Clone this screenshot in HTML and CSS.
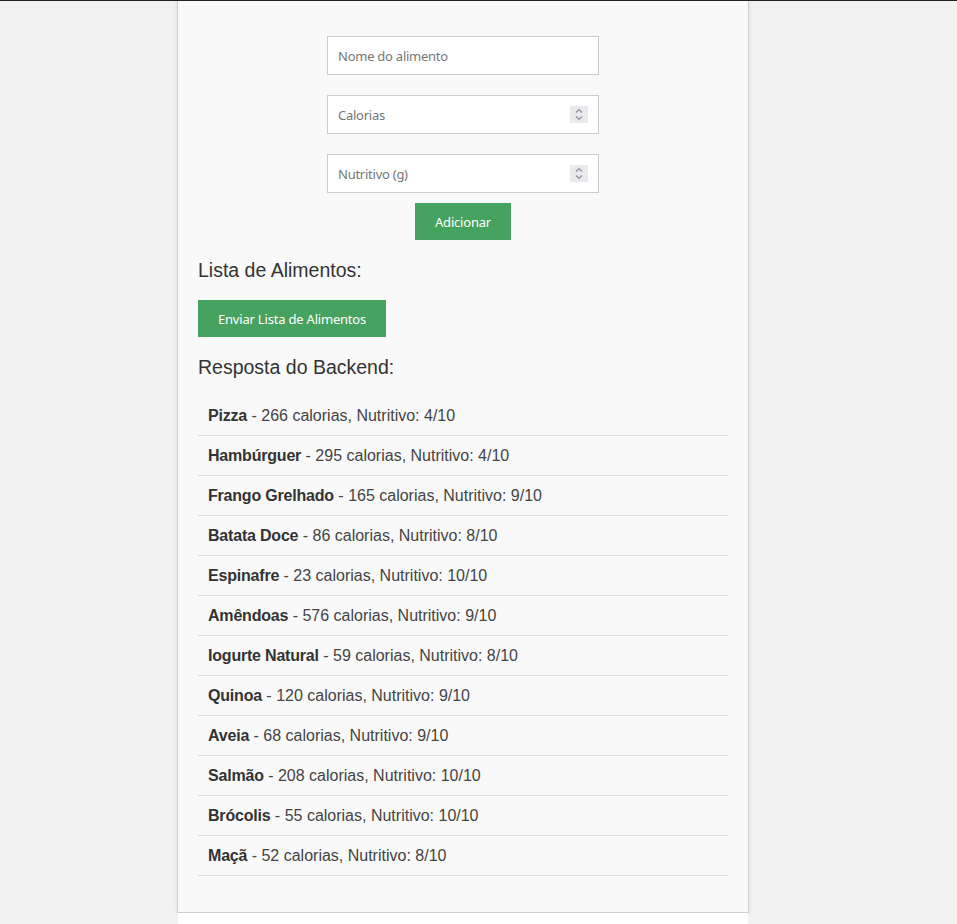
FILE: index.html
```html
<!DOCTYPE html>
<html lang="pt">
<head>
<meta charset="utf-8">
<title>Alimentos</title>
<link rel="stylesheet" href="styles.css">
</head>
<body>
<div class="topline"></div>
<div class="container">
  <form class="food-form">
    <input class="field" type="text" placeholder="Nome do alimento">
    <div class="num-wrap">
      <input class="field" type="number" placeholder="Calorias">
      <span class="spin"><svg width="18" height="17" viewBox="0 0 18 17"><path d="M6 6.5 L9 3.5 L12 6.5" fill="none" stroke="#8f8f99" stroke-width="1.2"/><path d="M6 10.5 L9 13.5 L12 10.5" fill="none" stroke="#8f8f99" stroke-width="1.2"/></svg></span>
    </div>
    <div class="num-wrap last">
      <input class="field" type="number" placeholder="Nutritivo (g)">
      <span class="spin"><svg width="18" height="17" viewBox="0 0 18 17"><path d="M6 6.5 L9 3.5 L12 6.5" fill="none" stroke="#8f8f99" stroke-width="1.2"/><path d="M6 10.5 L9 13.5 L12 10.5" fill="none" stroke="#8f8f99" stroke-width="1.2"/></svg></span>
    </div>
    <button type="button" class="btn">Adicionar</button>
  </form>
  <h3 class="heading">Lista de Alimentos:</h3>
  <button type="button" class="btn">Enviar Lista de Alimentos</button>
  <h3 class="heading response">Resposta do Backend:</h3>
  <ul class="results">
    <li><strong>Pizza</strong> - 266 calorias, Nutritivo: 4/10</li>
    <li><strong>Hambúrguer</strong> - 295 calorias, Nutritivo: 4/10</li>
    <li><strong>Frango Grelhado</strong> - 165 calorias, Nutritivo: 9/10</li>
    <li><strong>Batata Doce</strong> - 86 calorias, Nutritivo: 8/10</li>
    <li><strong>Espinafre</strong> - 23 calorias, Nutritivo: 10/10</li>
    <li><strong>Amêndoas</strong> - 576 calorias, Nutritivo: 9/10</li>
    <li><strong>Iogurte Natural</strong> - 59 calorias, Nutritivo: 8/10</li>
    <li><strong>Quinoa</strong> - 120 calorias, Nutritivo: 9/10</li>
    <li><strong>Aveia</strong> - 68 calorias, Nutritivo: 9/10</li>
    <li><strong>Salmão</strong> - 208 calorias, Nutritivo: 10/10</li>
    <li><strong>Brócolis</strong> - 55 calorias, Nutritivo: 10/10</li>
    <li><strong>Maçã</strong> - 52 calorias, Nutritivo: 8/10</li>
  </ul>
</div>
<div class="below"></div>
</body>
</html>
```

FILE: styles.css
```css
html, body {
  margin: 0;
  padding: 0;
  background: #f2f2f2;
  font-family: "Liberation Sans", Arial, sans-serif;
  color: #333;
}

.topline {
  height: 1px;
  background: #222;
}

.container {
  width: 530px;
  margin-left: 177px;
  padding: 35px 20px 20px;
  background: #f9f9f9;
  border: 1px solid #cfcfcf;
  border-top: none;
  box-shadow: 0 0 6px rgba(0, 0, 0, 0.08);
}

.food-form {
  display: flex;
  flex-direction: column;
  align-items: center;
}

.field {
  box-sizing: border-box;
  display: block;
  width: 272px;
  height: 39px;
  margin: 0 0 20px;
  padding: 0 10px;
  border: 1px solid #ccc;
  background: #fff;
  font-family: "Noto Sans", "Open Sans", sans-serif;
  font-size: 13px;
  letter-spacing: -0.25px;
  color: #333;
  outline: none;
  -moz-appearance: textfield;
}

.field::placeholder {
  color: #767676;
}

.field::-webkit-inner-spin-button,
.field::-webkit-outer-spin-button {
  -webkit-appearance: none;
  margin: 0;
}

.num-wrap {
  position: relative;
}

.num-wrap.last .field {
  margin-bottom: 10px;
}

.spin {
  position: absolute;
  top: 11px;
  right: 11px;
  width: 18px;
  height: 17px;
  background: #e9e9ee;
  display: block;
}

.spin svg {
  display: block;
}

.btn {
  box-sizing: border-box;
  height: 37px;
  padding: 0 20px;
  border: none;
  background: #46a25f;
  color: #fff;
  font-family: "Noto Sans", "Open Sans", sans-serif;
  font-size: 13px;
  letter-spacing: -0.2px;
  cursor: pointer;
}

.heading {
  margin: 19px 0;
  font-size: 19.5px;
  font-weight: normal;
  line-height: 22px;
  color: #333;
}

.heading.response {
  margin-bottom: 18px;
}

.results {
  list-style: none;
  margin: 0 0 16px;
  padding: 0;
}

.results li {
  padding: 10px;
  line-height: 19px;
  font-size: 16px;
  border-bottom: 1px solid #ddd;
  color: #444;
}

.results strong {
  font-weight: bold;
  letter-spacing: -0.2px;
  color: #333;
}

.below {
  width: 570px;
  height: 40px;
  margin-left: 178px;
  background: #fff;
}
```
